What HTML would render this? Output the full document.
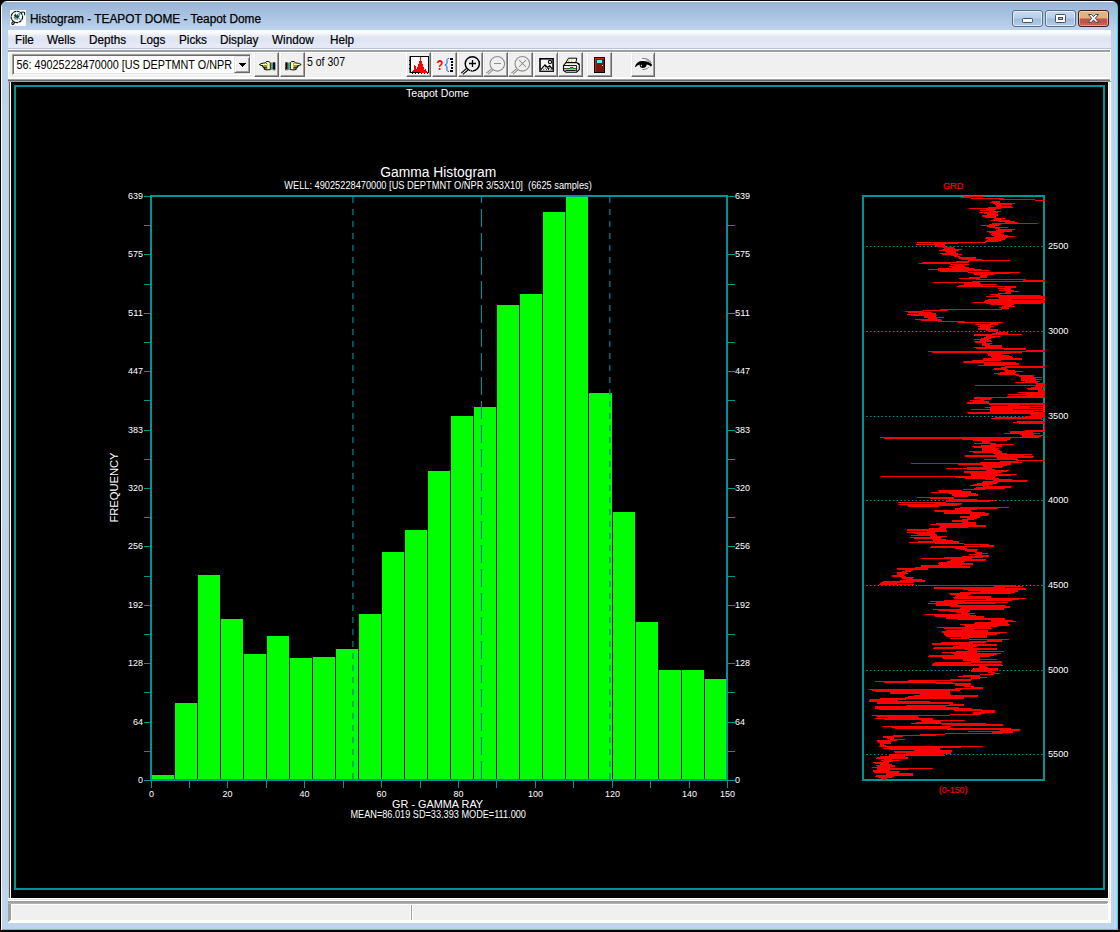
<!DOCTYPE html>
<html><head><meta charset="utf-8"><title>Histogram - TEAPOT DOME - Teapot Dome</title>
<style>
html,body{margin:0;padding:0;background:#000;}
body{width:1120px;height:932px;position:relative;overflow:hidden;font-family:"Liberation Sans",sans-serif;}
div,span,svg{position:absolute;box-sizing:border-box;}
#frame{left:1px;top:1px;width:1117px;height:929px;border-radius:6px 6px 0 0;
 background:linear-gradient(#fff,#fff) 0 0/100% 1px no-repeat,linear-gradient(#fff,#fff) 0 0/1px 100% no-repeat,
 linear-gradient(#2fd6ee,#2fd6ee) 100% 0/1px 100% no-repeat,linear-gradient(#2fd6ee,#2fd6ee) 0 100%/100% 1px no-repeat,
 linear-gradient(to bottom,#97b3d5 0,#a9c3e1 15px,#bdd4ec 29px,#bfd5ed 100%);}
#icon{left:10px;top:10px;width:16px;height:16px;}
#title{left:30px;top:12px;font-size:12px;line-height:15px;color:#000;-webkit-text-stroke:0.25px #000;white-space:nowrap;transform-origin:0 0;transform:scaleX(0.987);}
.cb{top:10px;width:31px;height:17px;border:1px solid #5a6f88;border-radius:3px;
 background:linear-gradient(to bottom,#c8dcf2 0,#b4cde9 48%,#9fbcdc 52%,#b3cde9 100%);box-shadow:inset 0 0 0 1px rgba(255,255,255,.55);}
#bmin{left:1012px}#bmax{left:1045px}#bclose{left:1078px;border-color:#4a1c1c;background:linear-gradient(to bottom,#e2b684 0,#ddb07c 48%,#c05252 52%,#c05252 100%);box-shadow:inset 0 0 0 1px rgba(255,235,200,.5);}
#menubar{left:8px;top:30px;width:1103px;height:20px;background:linear-gradient(to bottom,#fcfcfd 0,#fcfcfd 2px,#f3f5fa 4px,#e6e9f5 6px,#e0e5f3 8px,#e0e5f3 11px,#e5e8f6 13px,#e6e9f6 18px,#bac4d8 18px,#bac4d8 19px,#f8f9fc 19px);}
#menus{left:0;top:30px;width:400px;height:19px;}
#menus span{top:3px;-webkit-text-stroke:0.2px #000;transform-origin:0 0;transform:scaleX(0.975);font-size:12px;line-height:15px;color:#000;white-space:nowrap;}
#tbtop{left:8px;top:50px;width:1103px;height:3px;background:linear-gradient(#a0a0a0 0,#a0a0a0 2px,#fff 2px);}
#toolbar{left:8px;top:53px;width:1103px;height:24px;background:#f0f0f0;}
#tbbot{left:8px;top:77px;width:1103px;height:5px;background:linear-gradient(#fff 0,#fff 2px,#a0a0a0 2px,#a0a0a0 3px,#696969 3px,#696969 4px,#a0a0a0 4px);}
#client{left:8px;top:82px;width:1103px;height:816px;background:linear-gradient(#c8c6c2,#c8c6c2) 0 0/1px 100% no-repeat,linear-gradient(#585858,#585858) 1px 0/1px 100% no-repeat,linear-gradient(#fff,#fff) 2px 0/1px 100% no-repeat,linear-gradient(#fff,#fff) 1100px 0/1px 100% no-repeat,linear-gradient(#e3e3e3,#e3e3e3) 1101px 0/1px 100% no-repeat,linear-gradient(#fff,#fff) 1102px 0/1px 100% no-repeat,#000;}
#chart{left:0;top:0;}
.tb{top:52px;width:25px;height:25px;background:#f0f0f0;border:1px solid;border-color:#fff #696969 #696969 #fff;box-shadow:inset -1px -1px 0 #a0a0a0;}

</style></head>
<body>

<div id="frame"></div>
<div id="icon"><svg width="16" height="16" viewBox="0 0 16 16"><rect width="16" height="16" fill="#fbfbfb"/>
<circle cx="6.9" cy="6.9" r="5.7" fill="none" stroke="#0c1410" stroke-width="1.15" stroke-dasharray="3.2 0.5"/>
<path d="M3.6 11.4 C2.2 12 1.4 13.2 2 14.2 C3 15 4.4 13.6 4.6 12.2" fill="none" stroke="#0c1410" stroke-width="1.1"/>
<path d="M10.4 2.5 C12 1.9 13.8 1.9 14.6 2.4 L14.6 5.2" fill="none" stroke="#0c1410" stroke-width="1.05"/>
<path d="M4.2 6.4 L5.4 4.8 L6 7.6 L7.2 5.4 L7.8 8 L9.2 5.2" fill="none" stroke="#0b4a3a" stroke-width="1.3"/>
<path d="M8 3.6 L10.6 2.8 L9.8 5.6 Z" fill="#169a98"/>
<path d="M4.2 8.6 L5.2 9.4 M8.6 7.6 L10.4 9.8" stroke="#2aa0c8" stroke-width="0.9"/>
<path d="M3.8 7.6h1M5.6 9h1" stroke="#0b4a3a" stroke-width="0.9"/>
</svg></div>
<div id="title">Histogram - TEAPOT DOME - Teapot Dome</div>
<div class="cb" id="bmin"></div>
<div class="cb" id="bmax"></div>
<div class="cb" id="bclose"></div>
<svg style="left:1010px;top:8px" width="102" height="22" viewBox="1010 8 102 22">
<rect x="1022.5" y="18.5" width="10" height="4" rx="0.8" fill="#fff" stroke="#4a4f58" stroke-width="1"/>
<rect x="1055.5" y="14.5" width="10" height="8" rx="0.8" fill="#fff" stroke="#4a4f58" stroke-width="1"/>
<rect x="1058.5" y="17.5" width="4" height="2" fill="#9db6d6" stroke="#4a4f58" stroke-width="1"/>
<path d="M1088.5 14.5 L1091.5 14.5 L1093.5 16.7 L1095.5 14.5 L1098.5 14.5 L1095.3 18.3 L1098.7 22.3 L1095.6 22.3 L1093.5 19.9 L1091.4 22.3 L1088.3 22.3 L1091.7 18.3 Z" fill="#fff" stroke="#3e4450" stroke-width="1"/>
<path d="M1080 24h27" stroke="#e88a30" stroke-width="1" stroke-dasharray="1 1"/>
</svg>
<div id="menubar"></div>
<div id="menus"><span style="left:15px">File</span><span style="left:47px">Wells</span><span style="left:89px">Depths</span><span style="left:140px">Logs</span><span style="left:179px">Picks</span><span style="left:220px">Display</span><span style="left:272px">Window</span><span style="left:330px">Help</span></div>
<div id="tbtop"></div>
<div id="toolbar"></div>
<div id="tbbot"></div>
<div style="left:8px;top:52px;width:1px;height:27px;background:#fff"></div>
<div style="left:1110px;top:50px;width:1px;height:31px;background:#fff"></div>
<div id="combo" style="left:12px;top:54px;width:239px;height:21px;background:#fff;border:1px solid;border-color:#a0a0a0 #fff #fff #a0a0a0;box-shadow:inset 1px 1px 0 #696969,inset -1px -1px 0 #e3e3e3;"></div>
<div id="ddbtn" style="left:234px;top:56px;width:16px;height:17px;background:#f0f0f0;border:1px solid;border-color:#e3e3e3 #696969 #696969 #e3e3e3;box-shadow:inset 1px 1px 0 #fff,inset -1px -1px 0 #a0a0a0;"></div>
<div class="tb" style="left:254px"></div><div class="tb" style="left:280px"></div>
<div class="tb" style="left:406px"></div><div class="tb" style="left:432px"></div><div class="tb" style="left:458px"></div>
<div class="tb" style="left:483px"></div><div class="tb" style="left:508px"></div><div class="tb" style="left:534px;width:24px"></div>
<div class="tb" style="left:558px"></div><div class="tb" style="left:587px"></div><div class="tb" style="left:631px;width:24px"></div>
<svg style="left:0;top:50px" width="1120" height="32" viewBox="0 50 1120 32" font-family="Liberation Sans, sans-serif">
<text x="16.5" y="69" font-size="12.4" fill="#000" textLength="215.5" lengthAdjust="spacingAndGlyphs">56: 49025228470000 [US DEPTMNT O/NPR</text>
<path d="M239 63h7v1h-1v1h-1v1h-1v1h-1v-1h-1v-1h-1v-1h-1z" fill="#000" shape-rendering="crispEdges"/>
<text x="307" y="66" font-size="12.4" fill="#000" textLength="38" lengthAdjust="spacingAndGlyphs">5 of 307</text>
<path d="M256 53.5h21M255.5 54v20M282 53.5h21M281.5 54v20M408 53.5h21M407.5 54v20M434 53.5h21M433.5 54v20M460 53.5h21M459.5 54v20M485 53.5h21M484.5 54v20M510 53.5h21M509.5 54v20M536 53.5h21M535.5 54v20M560 53.5h21M559.5 54v20M589 53.5h21M588.5 54v20M633 53.5h21M632.5 54v20" stroke="#e0e0e0" stroke-width="1" stroke-dasharray="1 1" fill="none" shape-rendering="crispEdges"/>
<!-- hand left -->
<g>
<path d="M259.4 64.5 L262 63.3 L265.4 62.9 L266.4 61.5 L268.8 61.5 L270.3 62.7 L270.3 69.7 L266 69.9 L264.1 69.2 L264.6 68.2 L263.1 67.6 L263.6 66.8 L262.2 66.2 L263 65.6 L261 65.5 Z" fill="#ffffa4" stroke="#000" stroke-width="0.95" stroke-linejoin="round"/>
<path d="M263.4 66h3.8M263.8 67.6h3.4M264.8 68.9h2.6M266.2 63.2l1.2 1" stroke="#000" stroke-width="0.85" fill="none"/>
<rect x="271.2" y="62.6" width="1.8" height="7.2" fill="#00b0b4"/><rect x="273" y="62.3" width="2.3" height="7.9" fill="#000"/><rect x="273.2" y="69" width="1.3" height="1.2" fill="#ff8000"/>
<path d="M270.8 62.6v7.4" stroke="#c02000" stroke-width="0.8" stroke-dasharray="1 1"/>
</g>
<!-- hand right -->
<g transform="translate(560.6 0) scale(-1 1)">
<path d="M259.4 64.5 L262 63.3 L265.4 62.9 L266.4 61.5 L268.8 61.5 L270.3 62.7 L270.3 69.7 L266 69.9 L264.1 69.2 L264.6 68.2 L263.1 67.6 L263.6 66.8 L262.2 66.2 L263 65.6 L261 65.5 Z" fill="#ffffa4" stroke="#000" stroke-width="0.95" stroke-linejoin="round"/>
<path d="M263.4 66h3.8M263.8 67.6h3.4M264.8 68.9h2.6M266.2 63.2l1.2 1" stroke="#000" stroke-width="0.85" fill="none"/>
<rect x="271.2" y="62.6" width="1.8" height="7.2" fill="#00b0b4"/><rect x="273" y="62.3" width="2.3" height="7.9" fill="#000"/><rect x="273.2" y="69" width="1.3" height="1.2" fill="#ff8000"/>
<path d="M270.8 62.6v7.4" stroke="#c02000" stroke-width="0.8" stroke-dasharray="1 1"/>
</g>
<!-- B1 histogram -->
<g shape-rendering="crispEdges">
<rect x="409.5" y="56" width="19.5" height="17" fill="#000" shape-rendering="geometricPrecision"/><rect x="411" y="57" width="17" height="15" fill="#fff"/>
<path d="M409 60h1v1h-1zM409 64h1v1h-1zM409 68h1v1h-1zM412 73h1v1h-1zM415 73h1v1h-1zM418 73h1v1h-1zM421 73h1v1h-1zM424 73h1v1h-1zM427 73h1v1h-1z" fill="#000"/>
<path d="M412 72V71h1v-1h1v-5h1v1h1v3h1v-2h1v-3h1v-3h1v-4h1v4h1v3h1v3h1v3h1v-1h1v2h1v1h1v1z" fill="#ff0000"/>
</g>
<!-- B2 ?{ -->
<g>
<text x="436.4" y="70.2" font-size="14.6" font-weight="bold" fill="#ff0000" textLength="6.8" lengthAdjust="spacingAndGlyphs">?</text>
<path d="M449 58.5 C446.5 58.5 447 60 447 62 C447 64 446.5 64.8 444.8 65 C446.5 65.2 447 66 447 68 C447 70 446.5 71.5 449 71.5" fill="none" stroke="#0060e0" stroke-width="1"/>
<path d="M450 58h3v2h-3zM451 61h2v1.5h-2zM451 64h2v1.5h-2zM451 67h2v1.5h-2zM450 70h3v2h-3z" fill="#000" shape-rendering="crispEdges"/>
</g>
<!-- B3 zoom in -->
<g fill="none" stroke="#000">
<circle cx="472.3" cy="63.8" r="7.1" stroke-width="1.45"/>
<path d="M469 63.5h7M472.5 60v7" stroke-width="1.3"/>
<path d="M466.6 68.4L461.2 73.2M468 70L462.8 74.4" stroke-width="1.1"/>
<path d="M470 70.7h4" stroke="#fff" stroke-width="0.7" stroke-dasharray="1 1"/>
</g>
<!-- B4 zoom out (disabled) -->
<g fill="none" stroke="#8e8c86" stroke-width="1.05">
<circle cx="497.3" cy="63.8" r="7.3"/><path d="M494 63.5h7"/><path d="M491.4 68.8L486.4 73.2M492.8 70.2L488 74.2"/>
</g>
<!-- B5 zoom reset (disabled) -->
<g fill="none" stroke="#8e8c86" stroke-width="1.05">
<circle cx="522.3" cy="63.8" r="7.3"/><path d="M519 60l7 7M526 60l-7 7"/><path d="M516.4 68.8L511.4 73.2M517.8 70.2L513 74.2"/>
</g>
<!-- B6 picture -->
<g>
<rect x="540" y="58.8" width="13.1" height="12.3" fill="#f6f6f6" stroke="#000" stroke-width="1.6"/>
<circle cx="550" cy="62" r="1.6" fill="#fff" stroke="#000" stroke-width="1.1"/>
<path d="M540.6 70.4 L540.6 69.6 L545 64.9 L547.4 67.4 L549.6 65.9 L552.8 69.4 L552.8 70.4 Z" fill="#fff"/>
<path d="M540.6 69.8 L545 64.9 L549 69.2 M547.2 67.6 L549.6 65.9 L552.8 69.4" fill="none" stroke="#000" stroke-width="1.25"/>
<path d="M543.2 69.3h1M544.8 68h1M546 69.3h1M544.9 66.6h1M549.2 68h1M550.6 69.3h1M548 69.6h1" stroke="#000" stroke-width="0.9"/>
</g>
<!-- B7 printer -->
<g>
<path d="M566 62.5 L568.5 58.2 L576.8 58.2 L575.8 62.5Z" fill="#fff" stroke="#000" stroke-width="1"/>
<path d="M568.5 60h5.5M568 61.5h5" stroke="#ff8000" stroke-width="0.8" stroke-dasharray="1.2 1.6"/>
<path d="M563.5 65.5 L566 62.6 L576.5 62.6 L579.3 64 L579.3 69.5 L576.5 72.3 L566 72.3 L563.5 70.5Z" fill="#fff" stroke="#000" stroke-width="1.1"/>
<path d="M564 65.6h12.6M564 68.8h12.4M565.4 70.6h10.5" stroke="#000" stroke-width="1"/>
<path d="M576.6 65.6v6M576.8 63l2.3 2" stroke="#000" stroke-width="0.9"/>
<rect x="570" y="67" width="3.4" height="1" fill="#ff0000"/><rect x="570" y="68" width="3.4" height="1" fill="#00d000"/>
<path d="M577.5 66.5l1 1M577.5 68.5l1 1" stroke="#808080" stroke-width="0.7"/>
</g>
<!-- B8 door -->
<g shape-rendering="crispEdges">
<rect x="594" y="57" width="11" height="16" fill="#000"/><rect x="595" y="58" width="9" height="14" fill="#7c180c"/>
<rect x="595" y="58" width="9" height="1" fill="#c82410"/><rect x="595" y="58" width="1" height="14" fill="#c82410"/>
<rect x="597" y="60" width="5" height="3" fill="#40ffff"/><rect x="602" y="65" width="1" height="1" fill="#ffff80"/>
</g>
<!-- B9 eye -->
<g>
<path d="M635 66.5 C636 63 638.5 61 642.5 61 C647 61 650.5 62.5 652 64.5 C651.8 65.8 651.4 66.3 650.4 66.4 C649.4 65.3 648 64.6 646.6 64.6 C646.8 66.8 645 68 642.8 68 C640.6 68 639.4 66.6 639.6 64.6 C638 65 636.6 66 635.8 67.2Z" fill="#000"/>
<path d="M640.6 65.4l1.2-1 0 2.4z" fill="#fff"/>
<path d="M642 58.4 C646 58 649.5 59.6 651.4 62.6" fill="none" stroke="#808080" stroke-width="1"/>
<path d="M646 59l5 4" stroke="#a0a0a0" stroke-width="1.6"/>
<path d="M642.4 69.6 C645 69.6 647.4 68.6 649 67" fill="none" stroke="#606060" stroke-width="0.8"/>
</g>
</svg>
<div id="client"></div><svg id="chart" width="1120" height="932" viewBox="0 0 1120 932" shape-rendering="crispEdges" font-family="Liberation Sans, sans-serif">
<path d="M15 86H1104V889H15Z" fill="none" stroke="#009494" stroke-width="2"/>
<path fill="#00ff00" d="M152 775H174V779H152ZM175 703H197V779H175ZM198 575H220V779H198ZM221 619H243V779H221ZM244 654H266V779H244ZM267 636H289V779H267ZM290 658H312V779H290ZM313 657H335V779H313ZM336 649H358V779H336ZM359 614H381V779H359ZM382 552H404V779H382ZM405 530H427V779H405ZM428 471H450V779H428ZM451 416H473V779H451ZM474 407H496V779H474ZM497 305H519V779H497ZM520 294H542V779H520ZM543 212H565V779H543ZM566 197H588V779H566ZM589 393H612V779H589ZM613 512H635V779H613ZM636 622H658V779H636ZM659 670H681V779H659ZM682 670H704V779H682ZM705 679H726V779H705Z"/>
<g shape-rendering="geometricPrecision" fill="none" stroke-width="1" stroke-dasharray="6 6"><path d="M352.95 197V649" stroke="#00a0a4" stroke-dashoffset="0"/><path d="M352.95 649V779" stroke="#0c5cc0" stroke-dashoffset="8"/></g>
<g shape-rendering="geometricPrecision" fill="none" stroke-width="1" stroke-dasharray="18 6"><path d="M481.41 197V407" stroke="#00a0a4" stroke-dashoffset="12"/><path d="M481.41 407V779" stroke="#0c5cc0" stroke-dashoffset="6"/></g>
<g shape-rendering="geometricPrecision" fill="none" stroke-width="1" stroke-dasharray="6 6"><path d="M609.86 197V393" stroke="#00a0a4" stroke-dashoffset="0"/><path d="M609.86 393V779" stroke="#0c5cc0" stroke-dashoffset="4"/></g>
<path d="M151 196H727V780H151Z" fill="none" stroke="#009494" stroke-width="2"/>
<path fill="#009494" d="M144 780h6v1h-6zM728 780h7v1h-7zM144 751h6v1h-6zM728 751h7v1h-7zM144 722h6v1h-6zM728 722h7v1h-7zM144 692h6v1h-6zM728 692h7v1h-7zM144 663h6v1h-6zM728 663h7v1h-7zM144 634h6v1h-6zM728 634h7v1h-7zM144 605h6v1h-6zM728 605h7v1h-7zM144 576h6v1h-6zM728 576h7v1h-7zM144 546h6v1h-6zM728 546h7v1h-7zM144 517h6v1h-6zM728 517h7v1h-7zM144 488h6v1h-6zM728 488h7v1h-7zM144 459h6v1h-6zM728 459h7v1h-7zM144 430h6v1h-6zM728 430h7v1h-7zM144 400h6v1h-6zM728 400h7v1h-7zM144 371h6v1h-6zM728 371h7v1h-7zM144 342h6v1h-6zM728 342h7v1h-7zM144 313h6v1h-6zM728 313h7v1h-7zM144 284h6v1h-6zM728 284h7v1h-7zM144 254h6v1h-6zM728 254h7v1h-7zM144 225h6v1h-6zM728 225h7v1h-7zM144 196h6v1h-6zM728 196h7v1h-7zM151 781h1v7h-1zM189 781h1v7h-1zM227 781h1v7h-1zM266 781h1v7h-1zM304 781h1v7h-1zM343 781h1v7h-1zM381 781h1v7h-1zM420 781h1v7h-1zM458 781h1v7h-1zM496 781h1v7h-1zM535 781h1v7h-1zM573 781h1v7h-1zM612 781h1v7h-1zM650 781h1v7h-1zM689 781h1v7h-1zM727 781h1v7h-1z"/>
<text x="143" y="783" font-size="9.7" text-anchor="end" fill="#fff" textLength="5" lengthAdjust="spacingAndGlyphs">0</text>
<text x="735" y="783" font-size="9.7" text-anchor="start" fill="#fff" textLength="5" lengthAdjust="spacingAndGlyphs">0</text>
<text x="143" y="725" font-size="9.7" text-anchor="end" fill="#fff" textLength="10" lengthAdjust="spacingAndGlyphs">64</text>
<text x="735" y="725" font-size="9.7" text-anchor="start" fill="#fff" textLength="10" lengthAdjust="spacingAndGlyphs">64</text>
<text x="143" y="666" font-size="9.7" text-anchor="end" fill="#fff" textLength="15" lengthAdjust="spacingAndGlyphs">128</text>
<text x="735" y="666" font-size="9.7" text-anchor="start" fill="#fff" textLength="15" lengthAdjust="spacingAndGlyphs">128</text>
<text x="143" y="608" font-size="9.7" text-anchor="end" fill="#fff" textLength="15" lengthAdjust="spacingAndGlyphs">192</text>
<text x="735" y="608" font-size="9.7" text-anchor="start" fill="#fff" textLength="15" lengthAdjust="spacingAndGlyphs">192</text>
<text x="143" y="549" font-size="9.7" text-anchor="end" fill="#fff" textLength="15" lengthAdjust="spacingAndGlyphs">256</text>
<text x="735" y="549" font-size="9.7" text-anchor="start" fill="#fff" textLength="15" lengthAdjust="spacingAndGlyphs">256</text>
<text x="143" y="491" font-size="9.7" text-anchor="end" fill="#fff" textLength="15" lengthAdjust="spacingAndGlyphs">320</text>
<text x="735" y="491" font-size="9.7" text-anchor="start" fill="#fff" textLength="15" lengthAdjust="spacingAndGlyphs">320</text>
<text x="143" y="433" font-size="9.7" text-anchor="end" fill="#fff" textLength="15" lengthAdjust="spacingAndGlyphs">383</text>
<text x="735" y="433" font-size="9.7" text-anchor="start" fill="#fff" textLength="15" lengthAdjust="spacingAndGlyphs">383</text>
<text x="143" y="374" font-size="9.7" text-anchor="end" fill="#fff" textLength="15" lengthAdjust="spacingAndGlyphs">447</text>
<text x="735" y="374" font-size="9.7" text-anchor="start" fill="#fff" textLength="15" lengthAdjust="spacingAndGlyphs">447</text>
<text x="143" y="316" font-size="9.7" text-anchor="end" fill="#fff" textLength="15" lengthAdjust="spacingAndGlyphs">511</text>
<text x="735" y="316" font-size="9.7" text-anchor="start" fill="#fff" textLength="15" lengthAdjust="spacingAndGlyphs">511</text>
<text x="143" y="257" font-size="9.7" text-anchor="end" fill="#fff" textLength="15" lengthAdjust="spacingAndGlyphs">575</text>
<text x="735" y="257" font-size="9.7" text-anchor="start" fill="#fff" textLength="15" lengthAdjust="spacingAndGlyphs">575</text>
<text x="143" y="199" font-size="9.7" text-anchor="end" fill="#fff" textLength="15" lengthAdjust="spacingAndGlyphs">639</text>
<text x="735" y="199" font-size="9.7" text-anchor="start" fill="#fff" textLength="15" lengthAdjust="spacingAndGlyphs">639</text>
<text x="151.5" y="797" font-size="9.7" text-anchor="middle" fill="#fff" textLength="5" lengthAdjust="spacingAndGlyphs">0</text>
<text x="227.5" y="797" font-size="9.7" text-anchor="middle" fill="#fff" textLength="10" lengthAdjust="spacingAndGlyphs">20</text>
<text x="304.5" y="797" font-size="9.7" text-anchor="middle" fill="#fff" textLength="10" lengthAdjust="spacingAndGlyphs">40</text>
<text x="381.5" y="797" font-size="9.7" text-anchor="middle" fill="#fff" textLength="10" lengthAdjust="spacingAndGlyphs">60</text>
<text x="458.5" y="797" font-size="9.7" text-anchor="middle" fill="#fff" textLength="10" lengthAdjust="spacingAndGlyphs">80</text>
<text x="535.5" y="797" font-size="9.7" text-anchor="middle" fill="#fff" textLength="15" lengthAdjust="spacingAndGlyphs">100</text>
<text x="612.5" y="797" font-size="9.7" text-anchor="middle" fill="#fff" textLength="15" lengthAdjust="spacingAndGlyphs">120</text>
<text x="689.5" y="797" font-size="9.7" text-anchor="middle" fill="#fff" textLength="15" lengthAdjust="spacingAndGlyphs">140</text>
<text x="727.5" y="797" font-size="9.7" text-anchor="middle" fill="#fff" textLength="15" lengthAdjust="spacingAndGlyphs">150</text>
<text x="437.5" y="97" font-size="11" text-anchor="middle" fill="#fff" textLength="63" lengthAdjust="spacingAndGlyphs">Teapot Dome</text>
<text x="438.2" y="177" font-size="14" text-anchor="middle" fill="#fff" textLength="116" lengthAdjust="spacingAndGlyphs">Gamma Histogram</text>
<text x="438" y="189" font-size="10" text-anchor="middle" fill="#fff" textLength="307.5" lengthAdjust="spacingAndGlyphs" xml:space="preserve">WELL: 49025228470000 [US DEPTMNT O/NPR 3/53X10]  (6625 samples)</text>
<text x="437.6" y="808" font-size="11" text-anchor="middle" fill="#fff" textLength="91" lengthAdjust="spacingAndGlyphs">GR - GAMMA RAY</text>
<text x="438.2" y="817.6" font-size="10" text-anchor="middle" fill="#fff" textLength="175.5" lengthAdjust="spacingAndGlyphs">MEAN=86.019 SD=33.393 MODE=111.000</text>
<text transform="translate(117.5 487.5) rotate(-90)" font-size="11" text-anchor="middle" fill="#fff" textLength="70" lengthAdjust="spacingAndGlyphs">FREQUENCY</text>
<path d="M863 196H1044V780H863Z" fill="none" stroke="#009494" stroke-width="2"/>
<path d="M866.3 246.5H1043" stroke="#00a0a0" stroke-width="1" stroke-dasharray="1.4 2.4" fill="none" shape-rendering="geometricPrecision"/><text x="1048" y="249" font-size="9.7" text-anchor="start" fill="#fff" textLength="20.5" lengthAdjust="spacingAndGlyphs">2500</text><path d="M866.3 331.5H1043" stroke="#00a0a0" stroke-width="1" stroke-dasharray="1.4 2.4" fill="none" shape-rendering="geometricPrecision"/><text x="1048" y="334" font-size="9.7" text-anchor="start" fill="#fff" textLength="20.5" lengthAdjust="spacingAndGlyphs">3000</text><path d="M866.3 416.5H1043" stroke="#00a0a0" stroke-width="1" stroke-dasharray="1.4 2.4" fill="none" shape-rendering="geometricPrecision"/><text x="1048" y="419" font-size="9.7" text-anchor="start" fill="#fff" textLength="20.5" lengthAdjust="spacingAndGlyphs">3500</text><path d="M866.3 500.5H1043" stroke="#00a0a0" stroke-width="1" stroke-dasharray="1.4 2.4" fill="none" shape-rendering="geometricPrecision"/><text x="1048" y="503" font-size="9.7" text-anchor="start" fill="#fff" textLength="20.5" lengthAdjust="spacingAndGlyphs">4000</text><path d="M866.3 585.5H1043" stroke="#00a0a0" stroke-width="1" stroke-dasharray="1.4 2.4" fill="none" shape-rendering="geometricPrecision"/><text x="1048" y="588" font-size="9.7" text-anchor="start" fill="#fff" textLength="20.5" lengthAdjust="spacingAndGlyphs">4500</text><path d="M866.3 670.5H1043" stroke="#00a0a0" stroke-width="1" stroke-dasharray="1.4 2.4" fill="none" shape-rendering="geometricPrecision"/><text x="1048" y="673" font-size="9.7" text-anchor="start" fill="#fff" textLength="20.5" lengthAdjust="spacingAndGlyphs">5000</text><path d="M866.3 754.5H1043" stroke="#00a0a0" stroke-width="1" stroke-dasharray="1.4 2.4" fill="none" shape-rendering="geometricPrecision"/><text x="1048" y="757" font-size="9.7" text-anchor="start" fill="#fff" textLength="20.5" lengthAdjust="spacingAndGlyphs">5500</text>
<path fill="#ff0000" d="M964 196h19v1h-19zM961 197h10v1h-10zM971 198h33v1h-33zM999 199h36v1h-36zM1035 200h10v1h-10zM992 201h8v1h-8zM990 202h10v1h-10zM993 203h22v1h-22zM995 204h17v1h-17zM996 205h6v1h-6zM996 206h16v1h-16zM988 207h25v1h-25zM969 208h32v1h-32zM986 209h10v1h-10zM980 210h15v1h-15zM989 211h12v1h-12zM979 212h19v1h-19zM984 213h12v1h-12zM987 214h11v1h-11zM982 215h16v1h-16zM982 216h14v1h-14zM985 217h11v1h-11zM994 218h11v1h-11zM993 219h9v1h-9zM991 220h19v1h-19zM998 221h17v1h-17zM1005 222h13v1h-13zM992 223h46v1h-46zM989 224h12v1h-12zM981 225h18v1h-18zM987 226h8v1h-8zM989 227h19v1h-19zM995 228h5v1h-5zM998 229h17v1h-17zM996 230h16v1h-16zM987 231h25v1h-25zM989 232h15v1h-15zM992 233h9v1h-9zM991 234h13v1h-13zM992 235h16v1h-16zM994 236h21v1h-21zM986 237h22v1h-22zM985 238h21v1h-21zM988 239h17v1h-17zM986 240h16v1h-16zM985 241h13v1h-13zM917 242h69v1h-69zM934 243h24v1h-24zM916 244h29v1h-29zM935 245h10v1h-10zM936 246h10v1h-10zM942 247h12v1h-12zM944 248h11v1h-11zM942 249h20v1h-20zM939 250h20v1h-20zM945 251h11v1h-11zM946 252h10v1h-10zM940 253h18v1h-18zM942 254h20v1h-20zM951 255h7v1h-7zM954 256h6v1h-6zM958 257h18v1h-18zM959 258h17v1h-17zM961 259h21v1h-21zM968 260h42v1h-42zM956 261h14v1h-14zM922 262h47v1h-47zM919 263h32v1h-32zM950 264h19v1h-19zM954 265h10v1h-10zM949 266h16v1h-16zM952 267h17v1h-17zM938 268h36v1h-36zM928 269h54v1h-54zM938 270h52v1h-52zM940 271h28v1h-28zM968 272h52v1h-52zM973 273h37v1h-37zM974 274h20v1h-20zM980 275h8v1h-8zM980 276h7v1h-7zM969 277h18v1h-18zM959 278h21v1h-21zM976 279h50v1h-50zM1023 280h22v1h-22zM972 281h73v1h-73zM933 282h47v1h-47zM964 283h17v1h-17zM964 284h33v1h-33zM959 285h24v1h-24zM957 286h59v1h-59zM1005 287h11v1h-11zM998 288h13v1h-13zM1004 289h7v1h-7zM999 290h15v1h-15zM1006 291h13v1h-13zM1005 292h6v1h-6zM998 293h13v1h-13zM990 294h10v1h-10zM995 295h46v1h-46zM986 296h59v1h-59zM998 297h47v1h-47zM999 298h46v1h-46zM988 299h24v1h-24zM985 300h60v1h-60zM984 301h61v1h-61zM973 302h72v1h-72zM986 303h55v1h-55zM990 304h24v1h-24zM1004 305h8v1h-8zM1002 306h13v1h-13zM999 307h10v1h-10zM1001 308h8v1h-8zM940 309h62v1h-62zM923 310h25v1h-25zM905 311h19v1h-19zM908 312h24v1h-24zM918 313h18v1h-18zM907 314h29v1h-29zM911 315h26v1h-26zM924 316h12v1h-12zM924 317h20v1h-20zM928 318h9v1h-9zM915 319h26v1h-26zM921 320h21v1h-21zM938 321h27v1h-27zM958 322h45v1h-45zM990 323h8v1h-8zM975 324h23v1h-23zM980 325h11v1h-11zM978 326h16v1h-16zM980 327h11v1h-11zM978 328h12v1h-12zM978 329h20v1h-20zM986 330h12v1h-12zM988 331h10v1h-10zM996 332h12v1h-12zM992 333h16v1h-16zM974 334h48v1h-48zM974 335h18v1h-18zM986 336h14v1h-14zM984 337h12v1h-12zM981 338h10v1h-10zM974 339h15v1h-15zM980 340h11v1h-11zM975 341h17v1h-17zM975 342h11v1h-11zM982 343h10v1h-10zM982 344h8v1h-8zM982 345h20v1h-20zM985 346h17v1h-17zM974 347h28v1h-28zM976 348h50v1h-50zM1004 349h22v1h-22zM1026 350h19v1h-19zM928 351h117v1h-117zM932 352h90v1h-90zM987 353h24v1h-24zM988 354h14v1h-14zM988 355h21v1h-21zM991 356h21v1h-21zM992 357h21v1h-21zM983 358h39v1h-39zM983 359h39v1h-39zM972 360h29v1h-29zM964 361h20v1h-20zM963 362h53v1h-53zM984 363h35v1h-35zM984 364h35v1h-35zM978 365h27v1h-27zM1005 366h40v1h-40zM1001 367h44v1h-44zM994 368h13v1h-13zM993 369h15v1h-15zM1004 370h11v1h-11zM1005 371h18v1h-18zM1000 372h16v1h-16zM994 373h21v1h-21zM998 374h21v1h-21zM1016 375h18v1h-18zM1019 376h15v1h-15zM1021 377h21v1h-21zM1021 378h15v1h-15zM1021 379h21v1h-21zM1021 380h15v1h-15zM1025 381h15v1h-15zM1015 382h23v1h-23zM1035 383h9v1h-9zM1036 384h9v1h-9zM975 385h70v1h-70zM1035 386h10v1h-10zM1031 387h14v1h-14zM1027 388h15v1h-15zM1028 389h16v1h-16zM1038 390h6v1h-6zM1038 391h7v1h-7zM1018 392h27v1h-27zM1025 393h20v1h-20zM1008 394h37v1h-37zM1026 395h19v1h-19zM1007 396h38v1h-38zM974 397h71v1h-71zM974 398h18v1h-18zM980 399h11v1h-11zM970 400h14v1h-14zM973 401h16v1h-16zM967 402h22v1h-22zM967 403h78v1h-78zM989 404h56v1h-56zM1008 405h12v1h-12zM991 406h54v1h-54zM985 407h45v1h-45zM990 408h54v1h-54zM971 409h42v1h-42zM990 410h55v1h-55zM990 411h44v1h-44zM967 412h78v1h-78zM968 413h77v1h-77zM1030 414h15v1h-15zM1031 415h14v1h-14zM1025 416h20v1h-20zM995 417h50v1h-50zM991 418h51v1h-51zM1041 419h4v1h-4zM1044 420h1v1h-1zM1017 421h28v1h-28zM1013 422h32v1h-32zM1019 423h26v1h-26zM1044 424h1v1h-1zM1044 425h1v1h-1zM1044 426h1v1h-1zM1044 427h1v1h-1zM1044 428h1v1h-1zM1044 429h1v1h-1zM1025 430h20v1h-20zM1010 431h35v1h-35zM1010 432h23v1h-23zM1004 433h36v1h-36zM1020 434h14v1h-14zM1022 435h23v1h-23zM1022 436h19v1h-19zM880 437h159v1h-159zM884 438h127v1h-127zM962 439h48v1h-48zM973 440h34v1h-34zM982 441h8v1h-8zM982 442h8v1h-8zM974 443h22v1h-22zM990 444h24v1h-24zM981 445h21v1h-21zM972 446h30v1h-30zM974 447h22v1h-22zM982 448h17v1h-17zM982 449h16v1h-16zM982 450h18v1h-18zM969 451h33v1h-33zM973 452h29v1h-29zM993 453h14v1h-14zM995 454h37v1h-37zM965 455h59v1h-59zM965 456h69v1h-69zM996 457h37v1h-37zM997 458h20v1h-20zM984 459h34v1h-34zM1016 460h29v1h-29zM1000 461h18v1h-18zM980 462h42v1h-42zM911 463h100v1h-100zM958 464h53v1h-53zM982 465h25v1h-25zM983 466h20v1h-20zM967 467h35v1h-35zM946 468h46v1h-46zM967 469h28v1h-28zM986 470h23v1h-23zM964 471h43v1h-43zM964 472h38v1h-38zM970 473h28v1h-28zM971 474h46v1h-46zM971 475h40v1h-40zM881 476h115v1h-115zM955 477h40v1h-40zM965 478h34v1h-34zM985 479h27v1h-27zM993 480h35v1h-35zM983 481h44v1h-44zM982 482h16v1h-16zM977 483h20v1h-20zM973 484h20v1h-20zM970 485h19v1h-19zM983 486h29v1h-29zM976 487h35v1h-35zM974 488h31v1h-31zM963 489h23v1h-23zM938 490h24v1h-24zM939 491h32v1h-32zM931 492h40v1h-40zM948 493h28v1h-28zM952 494h26v1h-26zM952 495h26v1h-26zM954 496h14v1h-14zM917 497h37v1h-37zM930 498h24v1h-24zM949 499h28v1h-28zM946 500h50v1h-50zM946 501h44v1h-44zM898 502h48v1h-48zM935 503h27v1h-27zM898 504h63v1h-63zM907 505h50v1h-50zM908 506h31v1h-31zM960 507h49v1h-49zM955 508h43v1h-43zM955 509h22v1h-22zM934 510h37v1h-37zM935 511h37v1h-37zM944 512h41v1h-41zM944 513h45v1h-45zM970 514h19v1h-19zM970 515h18v1h-18zM960 516h20v1h-20zM960 517h20v1h-20zM967 518h10v1h-10zM962 519h12v1h-12zM952 520h16v1h-16zM952 521h16v1h-16zM962 522h14v1h-14zM936 523h40v1h-40zM930 524h46v1h-46zM939 525h47v1h-47zM940 526h46v1h-46zM939 527h29v1h-29zM929 528h17v1h-17zM907 529h39v1h-39zM907 530h40v1h-40zM927 531h20v1h-20zM907 532h28v1h-28zM914 533h21v1h-21zM917 534h20v1h-20zM911 535h26v1h-26zM930 536h17v1h-17zM910 537h32v1h-32zM914 538h27v1h-27zM932 539h14v1h-14zM933 540h20v1h-20zM918 541h41v1h-41zM909 542h50v1h-50zM935 543h29v1h-29zM964 544h25v1h-25zM980 545h14v1h-14zM931 546h63v1h-63zM930 547h35v1h-35zM955 548h12v1h-12zM960 549h18v1h-18zM965 550h12v1h-12zM967 551h10v1h-10zM975 552h7v1h-7zM976 553h12v1h-12zM969 554h13v1h-13zM976 555h13v1h-13zM977 556h12v1h-12zM962 556h27v1h-27zM944 557h39v1h-39zM921 558h51v1h-51zM951 559h35v1h-35zM950 560h36v1h-36zM947 561h18v1h-18zM939 562h25v1h-25zM938 563h35v1h-35zM939 564h34v1h-34zM921 565h41v1h-41zM921 566h49v1h-49zM915 567h55v1h-55zM897 568h31v1h-31zM897 569h31v1h-31zM905 570h8v1h-8zM902 571h9v1h-9zM897 572h10v1h-10zM897 573h11v1h-11zM897 574h8v1h-8zM892 575h12v1h-12zM892 576h14v1h-14zM901 577h13v1h-13zM902 578h11v1h-11zM906 579h16v1h-16zM900 580h25v1h-25zM883 581h42v1h-42zM881 582h33v1h-33zM880 583h17v1h-17zM879 584h35v1h-35zM918 585h96v1h-96zM994 586h29v1h-29zM934 587h71v1h-71zM934 588h92v1h-92zM963 589h63v1h-63zM968 590h50v1h-50zM980 591h38v1h-38zM960 592h55v1h-55zM949 593h62v1h-62zM950 594h21v1h-21zM956 595h12v1h-12zM955 596h36v1h-36zM953 597h38v1h-38zM954 598h72v1h-72zM986 599h33v1h-33zM944 600h68v1h-68zM930 601h35v1h-35zM936 602h72v1h-72zM928 603h68v1h-68zM936 604h22v1h-22zM936 605h70v1h-70zM950 606h60v1h-60zM961 607h49v1h-49zM960 608h44v1h-44zM933 609h71v1h-71zM938 610h32v1h-32zM949 611h21v1h-21zM956 612h12v1h-12zM961 613h14v1h-14zM925 614h45v1h-45zM934 615h42v1h-42zM935 616h49v1h-49zM946 617h38v1h-38zM946 618h59v1h-59zM957 619h48v1h-48zM991 620h22v1h-22zM991 621h25v1h-25zM975 622h33v1h-33zM974 623h34v1h-34zM960 624h50v1h-50zM964 625h45v1h-45zM965 626h33v1h-33zM937 627h54v1h-54zM944 628h48v1h-48zM962 629h12v1h-12zM946 630h42v1h-42zM942 631h46v1h-46zM942 632h65v1h-65zM944 633h56v1h-56zM944 634h53v1h-53zM945 635h42v1h-42zM946 636h41v1h-41zM961 637h26v1h-26zM950 638h19v1h-19zM969 639h40v1h-40zM987 640h15v1h-15zM969 641h33v1h-33zM941 642h45v1h-45zM932 643h41v1h-41zM932 644h65v1h-65zM959 645h38v1h-38zM953 646h24v1h-24zM934 647h39v1h-39zM933 648h64v1h-64zM964 649h33v1h-33zM968 650h9v1h-9zM956 651h48v1h-48zM942 652h35v1h-35zM951 653h50v1h-50zM954 654h43v1h-43zM929 655h65v1h-65zM928 656h62v1h-62zM942 657h38v1h-38zM943 658h37v1h-37zM963 659h34v1h-34zM963 660h17v1h-17zM971 661h31v1h-31zM935 662h67v1h-67zM933 663h38v1h-38zM932 664h70v1h-70zM932 665h71v1h-71zM979 666h7v1h-7zM979 667h9v1h-9zM973 668h25v1h-25zM972 669h26v1h-26zM971 670h27v1h-27zM971 671h21v1h-21zM988 672h7v1h-7zM991 673h9v1h-9zM980 674h14v1h-14zM963 675h17v1h-17zM958 676h22v1h-22zM971 677h16v1h-16zM971 678h9v1h-9zM950 679h22v1h-22zM908 680h63v1h-63zM875 681h61v1h-61zM884 682h69v1h-69zM936 683h35v1h-35zM955 684h16v1h-16zM955 685h15v1h-15zM964 686h10v1h-10zM971 687h12v1h-12zM955 688h28v1h-28zM869 689h93v1h-93zM872 690h88v1h-88zM875 691h75v1h-75zM890 692h60v1h-60zM890 693h60v1h-60zM920 694h31v1h-31zM914 695h64v1h-64zM908 696h70v1h-70zM905 697h59v1h-59zM880 698h84v1h-84zM870 699h36v1h-36zM869 700h29v1h-29zM869 701h61v1h-61zM877 702h76v1h-76zM877 703h76v1h-76zM949 704h15v1h-15zM906 705h58v1h-58zM875 706h71v1h-71zM875 707h84v1h-84zM875 708h97v1h-97zM879 709h103v1h-103zM954 710h41v1h-41zM981 711h14v1h-14zM973 712h22v1h-22zM973 713h12v1h-12zM950 714h31v1h-31zM872 715h78v1h-78zM876 716h42v1h-42zM888 717h31v1h-31zM875 718h58v1h-58zM884 719h49v1h-49zM921 720h44v1h-44zM922 721h19v1h-19zM916 722h25v1h-25zM911 723h75v1h-75zM942 724h61v1h-61zM951 725h52v1h-52zM882 726h69v1h-69zM891 727h59v1h-59zM895 728h116v1h-116zM947 729h73v1h-73zM1000 730h20v1h-20zM968 731h45v1h-45zM992 732h21v1h-21zM945 733h58v1h-58zM920 734h25v1h-25zM893 735h43v1h-43zM883 736h20v1h-20zM883 737h11v1h-11zM887 738h7v1h-7zM890 739h15v1h-15zM877 740h20v1h-20zM877 741h15v1h-15zM878 742h13v1h-13zM880 743h11v1h-11zM880 744h4v1h-4zM880 745h6v1h-6zM879 746h104v1h-104zM887 747h74v1h-74zM883 748h57v1h-57zM889 749h51v1h-51zM914 750h38v1h-38zM894 751h58v1h-58zM895 752h56v1h-56zM906 753h45v1h-45zM889 754h55v1h-55zM889 755h56v1h-56zM880 756h25v1h-25zM877 757h31v1h-31zM876 758h32v1h-32zM884 759h8v1h-8zM881 760h19v1h-19zM883 761h10v1h-10zM873 762h16v1h-16zM875 763h14v1h-14zM880 764h12v1h-12zM876 765h19v1h-19zM877 766h18v1h-18zM872 767h18v1h-18zM877 768h56v1h-56zM877 769h32v1h-32zM873 770h17v1h-17zM873 771h27v1h-27zM874 772h25v1h-25zM886 773h27v1h-27zM886 774h27v1h-27zM876 775h37v1h-37zM875 776h19v1h-19zM878 777h14v1h-14zM881 778h6v1h-6zM883 779h3v1h-3z"/>
<text x="953.2" y="188.9" font-size="9.8" text-anchor="middle" fill="#ff0000" textLength="20.5" lengthAdjust="spacingAndGlyphs" stroke="#ff0000" stroke-width="0.2">GRD</text>
<text x="953.2" y="793" font-size="9.6" text-anchor="middle" fill="#ff0000" textLength="28.7" lengthAdjust="spacingAndGlyphs" stroke="#ff0000" stroke-width="0.15">(0-150)</text>
</svg><div id="status" style="left:8px;top:898px;width:1103px;height:25px;background:
linear-gradient(#fff,#fff) 0 0/100% 1px no-repeat,
linear-gradient(#e3e3e3,#e3e3e3) 0 1px/100% 1px no-repeat,
linear-gradient(#fff,#fff) 0 2px/100% 1px no-repeat,
linear-gradient(#a0a0a0,#a0a0a0) 0 3px/1100px 2px no-repeat,
linear-gradient(#b4b4b4,#b4b4b4) 0 5px/1099px 1px no-repeat,
linear-gradient(#a0a0a0,#a0a0a0) 0 3px/3px 19px no-repeat,
linear-gradient(#fff,#fff) 3px 6px/1097px 1px no-repeat,
linear-gradient(#fff,#fff) 3px 6px/1px 16px no-repeat,
linear-gradient(#fff,#fff) 402px 5px/1px 17px no-repeat,
linear-gradient(#a0a0a0,#a0a0a0) 403px 5px/1px 17px no-repeat,
linear-gradient(#fff,#fff) 404px 6px/1px 16px no-repeat,
linear-gradient(#f0f0f0,#f0f0f0) 3px 6px/1097px 16px no-repeat,
#fff;"></div>
<svg style="left:8px;top:917px" width="4" height="6" viewBox="0 0 4 6" shape-rendering="crispEdges"><path d="M0 5h1v-1h1v-1h1v-1h-3z" fill="#a0a0a0"/><path d="M0 6V5h1v-1h1v-1h1v3z" fill="#fff"/></svg>

</body></html>
